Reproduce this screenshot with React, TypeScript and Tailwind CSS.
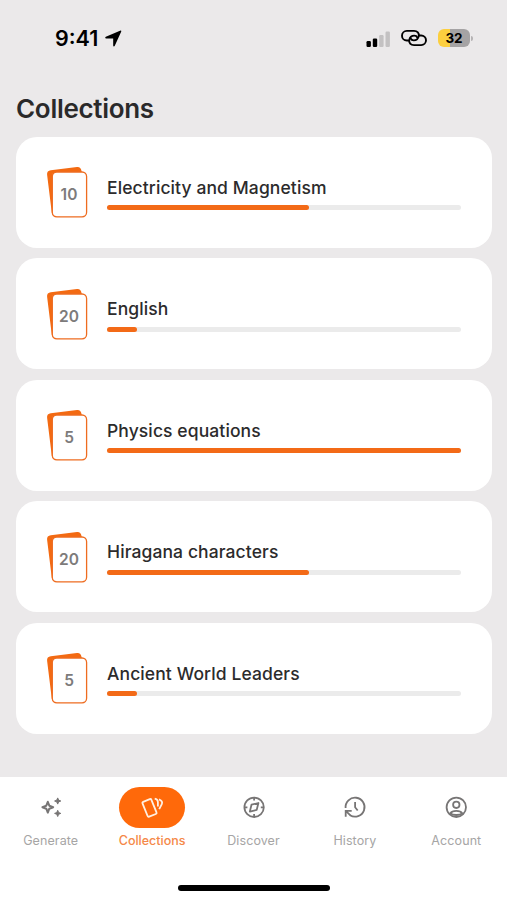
import type { ReactNode } from "react";
import { clsx } from "clsx";

const collections = [
  { title: "Electricity and Magnetism", count: 10, progress: 57.1 },
  { title: "English", count: 20, progress: 8.6 },
  { title: "Physics equations", count: 5, progress: 100 },
  { title: "Hiragana characters", count: 20, progress: 57.1 },
  { title: "Ancient World Leaders", count: 5, progress: 8.6 },
];

function Icon({ children }: { children: ReactNode }) {
  return (
    <svg
      viewBox="0 0 24 24"
      className="-mt-px h-6 w-6"
      fill="none"
      stroke="currentColor"
      strokeWidth="1.8"
      strokeLinejoin="round"
    >
      {children}
    </svg>
  );
}

function GenerateIcon() {
  return (
    <Icon>
      <path strokeWidth="2" d="M8.8 6.8 10.3 10.7 14.2 12.2 10.3 13.7 8.8 17.6 7.3 13.7 3.4 12.2 7.3 10.7Z" />
      <path
        fill="currentColor"
        strokeWidth="1"
        d="m18.7 2.9.9 2.2 2.2.9-2.2.9-.9 2.2-.9-2.2-2.2-.9 2.2-.9ZM18.7 15.3l.9 2.2 2.2.9-2.2.9-.9 2.2-.9-2.2-2.2-.9 2.2-.9Z"
      />
    </Icon>
  );
}

function CollectionsIcon() {
  return (
    <Icon>
      <rect x="4.7" y="4.9" width="9.6" height="16" rx="1.2" transform="rotate(-22 9.5 12.9)" />
      <path d="M14.7 3.6c2 .4 3 1.4 3.2 3.200v4.800" />
      <path d="M19 4.300c2.800 1.200 3.800 2.900 2.700 5l-2.500 4.800" />
    </Icon>
  );
}

function DiscoverIcon() {
  return (
    <Icon>
      <circle cx="12.1" cy="12.3" r="9.7" />
      <path d="M7.8 16.6 9.5 9.7 16.4 8 14.7 14.900Z" />
      <path d="M12.1 2.6v3M12.1 19v3M2.400 12.300h3M18.800 12.300h3" />
    </Icon>
  );
}

function HistoryIcon() {
  return (
    <Icon>
      <path d="M2.600 13A9.500 9.500 0 1 1 7 20.200" />
      <path d="M8.700 15.800H2.700v5.900M3 16.100 7.400 20.400" strokeLinejoin="miter" />
      <path d="M12.100 7v5.300l2.600 3.200" />
    </Icon>
  );
}

function AccountIcon() {
  return (
    <Icon>
      <circle cx="12.300" cy="12.300" r="9.700" />
      <circle cx="12.300" cy="9.800" r="3.200" />
      <path d="M6.400 18.300c1-1.600 3.200-2.400 5.900-2.400s4.900.8 5.900 2.400c-1.200 1.200-3.300 1.700-5.900 1.700s-4.700-.5-5.900-1.700Z" />
    </Icon>
  );
}

const tabs = [
  { label: "Generate", icon: GenerateIcon },
  { label: "Collections", icon: CollectionsIcon, active: true },
  { label: "Discover", icon: DiscoverIcon },
  { label: "History", icon: HistoryIcon },
  { label: "Account", icon: AccountIcon },
];

function StatusBar() {
  return (
    <div className="flex h-[76px] items-center pr-[34px] pl-[55px] text-black">
      <span className="text-[21.5px] font-semibold">9:41</span>
      <svg viewBox="0 0 16 16" className="ml-[7px] h-[17px] w-[17px]" fill="currentColor">
        <path d="M14.7.4.8 6.4c-1 .5-.7 1.5.3 1.500h6.600v6.700c0 1.100 1.100 1.300 1.500.3l6-13.300c.4-.8-.1-1.400-.5-1.200Z" />
      </svg>
      <svg viewBox="0 0 25 16" className="mt-px ml-auto h-4 w-[25px]">
        <rect x="0.5" y="10" width="4.4" height="6" rx="1.2" />
        <rect x="6.8" y="7.5" width="4.4" height="8.5" rx="1.2" />
        <rect x="13.2" y="4" width="4.4" height="12" rx="1.2" fill="#c3c1c2" />
        <rect x="19.5" y="0.5" width="4.4" height="15.5" rx="1.2" fill="#c3c1c2" />
      </svg>
      <svg
        viewBox="0 0 26 18"
        className="ml-2.5 h-[18px] w-[26px]"
        fill="none"
        stroke="currentColor"
        strokeWidth="1.9"
        strokeLinecap="round"
      >
        <path d="M8 11.500H5.800a4.600 4.600 0 0 1 0-9.600h7.200c3.300 0 5.400 2.300 4.700 5.200-.5 2.700-2.700 4.300-5 4.300-1.500 0-2.500-.7-2.900-1.700" />
        <path d="M18 6.500h2.200a4.600 4.600 0 0 1 0 9.600H13c-3.300 0-5.400-2.300-4.700-5.200.5-2.700 2.700-4.300 5-4.300 1.500 0 2.500.7 2.900 1.700" />
      </svg>
      <div className="ml-[11px] flex items-center gap-px">
        <div className="flex h-[18px] w-8 items-center justify-center rounded-[6px] bg-linear-to-r from-[#fccf3f] from-38% to-[#a5a3a4] to-38% text-[13.5px] font-bold">
          32
        </div>
        <div className="h-[5px] w-[2px] rounded-r-full bg-[#b5b3b4]" />
      </div>
    </div>
  );
}

function DeckIcon({ count }: { count: number }) {
  return (
    <svg viewBox="0 0 42 52" className="h-[52px] w-[42px] shrink-0">
      <path
        d="M4.8 4.3 31 1.100c2.500-.3 4 1.200 4.500 3.700L37 12 14 50.800H9.500c-2.200 0-3.300-1.300-3.700-4L1.100 8.800C.8 6 2.200 4.600 4.800 4.300Z"
        fill="#f36a12"
      />
      <rect x="6.300" y="6" width="34.300" height="44.800" rx="4.500" fill="#fff" stroke="#ee6c20" strokeWidth="1.300" />
      <text x="23" y="34.300" textAnchor="middle" fontSize="15.500" fontWeight="600" fill="#7d7b7b">
        {count}
      </text>
    </svg>
  );
}

export default function App() {
  return (
    <div className="flex h-[900px] w-[507px] flex-col overflow-hidden bg-[#ebe9ea] font-['Inter',sans-serif]">
      <StatusBar />

      <main className="flex-1 px-4">
        <h1 className="pt-4 text-[26px] leading-[34px] font-semibold tracking-[-0.3px] text-[#2a292a]">
          Collections
        </h1>
        <div className="mt-[10.5px] flex flex-col gap-[10.5px]">
          {collections.map((item) => (
            <div
              key={item.title}
              className="flex h-[111px] w-[476px] items-center gap-[19px] rounded-[21px] bg-white px-[30px]"
            >
              <DeckIcon count={item.count} />
              <div className="flex-1 pt-0.5">
                <h2 className="text-[17.5px] leading-6 font-medium tracking-[0.1px] text-[#2c2b2c]">{item.title}</h2>
                <div className="mt-[5.5px] h-[5px] w-[354px] rounded-full bg-[#ebebeb]">
                  <div className="h-full rounded-full bg-[#f36a17]" style={{ width: `${item.progress}%` }} />
                </div>
              </div>
            </div>
          ))}
        </div>
      </main>

      <nav className="flex h-[123px] flex-col bg-white">
        <div className="flex pt-2.5">
          {tabs.map(({ label, icon: TabIcon, active }) => (
            <button key={label} className="flex flex-1 flex-col items-center gap-1">
              <span
                className={clsx(
                  "flex h-[41px] w-[66px] items-center justify-center rounded-full",
                  active ? "bg-[#ff690a] text-[#fff0e2]" : "text-[#777575]",
                )}
              >
                <TabIcon />
              </span>
              <span
                className={clsx(
                  "text-[12.5px] leading-[18px]",
                  active ? "font-medium text-[#f58848]" : "tracking-[0.1px] text-[#a6a5a5]",
                )}
              >
                {label}
              </span>
            </button>
          ))}
        </div>
        <div className="mt-auto mb-[9px] h-[6.5px] w-[152px] self-center rounded-full bg-black" />
      </nav>
    </div>
  );
}
